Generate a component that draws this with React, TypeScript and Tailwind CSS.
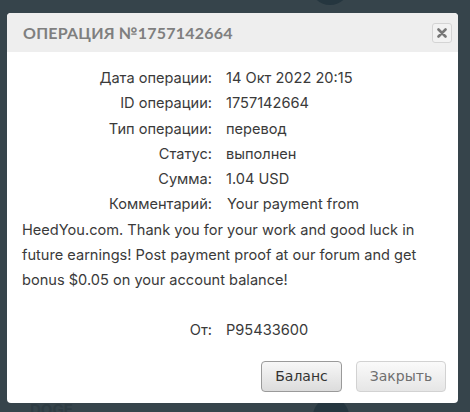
import React from 'react';

const rows: [string, string][] = [
  ['Дата операции:', '14 Окт 2022 20:15'],
  ['ID операции:', '1757142664'],
  ['Тип операции:', 'перевод'],
  ['Статус:', 'выполнен'],
  ['Сумма:', '1.04 USD'],
];

export default function App() {
  return (
    <div className="relative w-[470px] h-[412px] overflow-hidden bg-[#36444b]" style={{ fontFamily: 'Inter, "Noto Sans", sans-serif' }}>
      {/* page behind the dialog */}
      <div className="absolute left-[310px] top-[-35px] w-[40px] h-[40px] rounded-full bg-[#25363f]" />
      <div className="absolute left-[313px] top-[398px] w-[36px] h-[36px] rounded-full bg-[#25363f]" />
      <div className="absolute left-[30px] top-[400px] text-[15px] leading-[20px] font-bold text-[#2e3c43]">DOGE</div>

      <div className="absolute left-[7px] top-[13px] w-[451px] h-[390px] bg-white rounded-[4px] overflow-hidden">
        <div className="h-[39px] bg-[#eeeeee] flex items-center justify-between pl-[16px] pr-[6px]">
          <div className="text-[17px] tracking-[0.2px] text-[#7f7f7f] font-bold" style={{ fontFamily: 'Lato, sans-serif', fontSize: '16px' }}>
            ОПЕРАЦИЯ №1757142664
          </div>
          <button className="w-[20px] h-[20px] rounded-[3px] border border-[#d4d4d4] bg-[#f2f2f2] flex items-center justify-center">
            <svg width="10" height="10" viewBox="0 0 10 10">
              <path d="M1.5 1.5 L8.5 8.5 M8.5 1.5 L1.5 8.5" stroke="#777" strokeWidth="2.6" strokeLinecap="round" />
            </svg>
          </button>
        </div>

        <div className="px-[15px] pt-[14px] text-[14.6px] leading-[25.3px] text-[#3a3a3a]">
          {rows.map(([label, value]) => (
            <div key={label}>
              <span className="inline-block w-[190px] text-right">{label}</span>
              <span className="ml-[14px]">{value}</span>
            </div>
          ))}
          <div>
            <span className="inline-block w-[190px] text-right">Комментарий:</span>
            <span className="ml-[15px]">
              Your payment from HeedYou.com. Thank you for your work and good luck in future earnings! Post payment proof at our forum and get bonus $0.05 on your account balance!
            </span>
          </div>
          <div className="h-[24px]" />
          <div>
            <span className="inline-block w-[190px] text-right">От:</span>
            <span className="ml-[14px]">P95433600</span>
          </div>

          <div className="flex justify-end gap-[14px] mt-[18px] -mr-[3px]" style={{ fontFamily: '"DejaVu Sans", sans-serif' }}>
            <button className="w-[81px] h-[31px] rounded-[4px] border border-[#9a9a9a] bg-gradient-to-b from-[#f7f7f7] to-[#dcdcdc] text-[14px] text-[#333]">
              Баланс
            </button>
            <button className="w-[90px] h-[31px] rounded-[4px] border border-[#d2d2d2] bg-gradient-to-b from-[#fafafa] to-[#e6e6e6] text-[14px] text-[#6f6f6f]">
              Закрыть
            </button>
          </div>
        </div>
      </div>
    </div>
  );
}
